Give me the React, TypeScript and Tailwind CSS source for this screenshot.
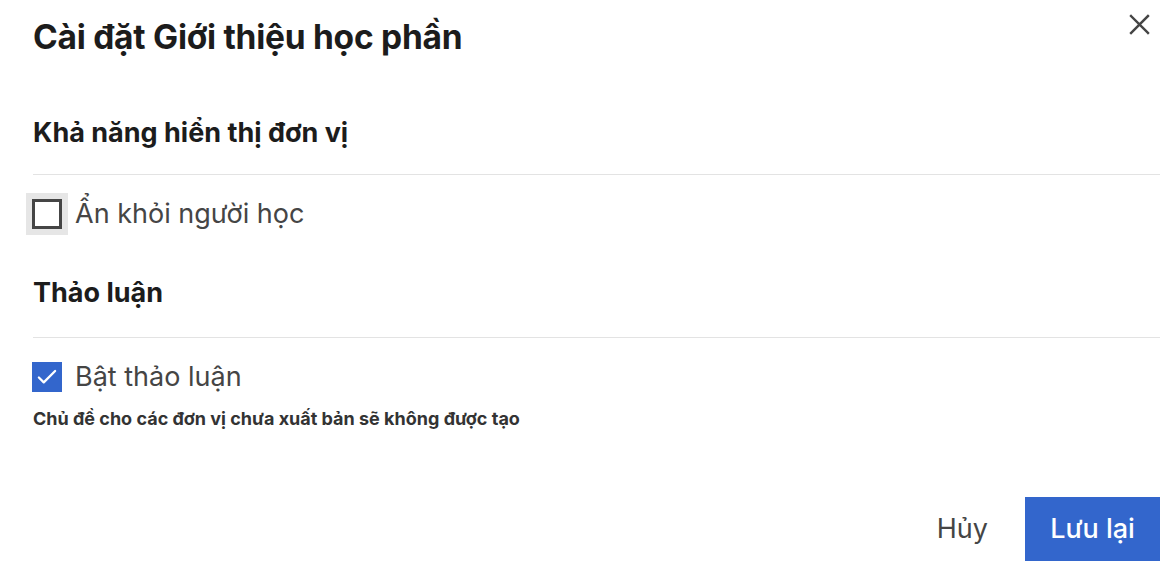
import { useState } from "react";

function Checkbox({ checked, focused, onChange }: { checked: boolean; focused?: boolean; onChange: () => void }) {
  return (
    <button
      type="button"
      onClick={onChange}
      className={`w-[42px] h-[42px] -ml-[7px] flex items-center justify-center ${focused ? "bg-[#e6e6e6]" : ""}`}
    >
      {checked ? (
        <span className="w-[30px] h-[30px] bg-[#3366cc] flex items-center justify-center">
          <svg width="26" height="26" viewBox="0 0 24 24" fill="none" stroke="white" strokeWidth="2.1" strokeLinecap="round" strokeLinejoin="round">
            <path d="M4.5 12.5l4.5 4.5L19.5 6.5" />
          </svg>
        </span>
      ) : (
        <span className="w-[30px] h-[30px] border-[3px] border-[#454545] bg-white" />
      )}
    </button>
  );
}

export default function App() {
  const [hidden, setHidden] = useState(false);
  const [discussion, setDiscussion] = useState(true);

  return (
    <div className="w-[1176px] h-[570px] bg-white text-[#1c1c1c] font-['Inter',sans-serif] flex flex-col pl-[33px] pr-[16px]">
      <div className="flex items-start justify-between pt-[17px]">
        <h1 className="text-[33.5px] leading-[40px] font-bold tracking-[-0.25px]">Cài đặt Giới thiệu học phần</h1>
        <button type="button" className="mt-[-11px] mr-[3px] w-[36px] h-[36px] flex items-center justify-center text-[#454545]">
          <svg width="29" height="29" viewBox="0 0 24 24" fill="none" stroke="currentColor" strokeWidth="2" strokeLinecap="square">
            <path d="M5 5l14 14M19 5L5 19" />
          </svg>
        </button>
      </div>

      <h2 className="mt-[58px] text-[27px] leading-[36px] font-bold">Khả năng hiển thị đơn vị</h2>
      <div className="mt-[23px] h-px bg-[#e3e3e3]" />
      <label className="mt-[18px] flex items-center gap-[7px]">
        <Checkbox checked={hidden} focused onChange={() => setHidden((p) => !p)} />
        <span className="text-[27px] leading-[36px] text-[#454545]">Ẩn khỏi người học</span>
      </label>

      <h2 className="mt-[40px] text-[27px] leading-[36px] font-bold">Thảo luận</h2>
      <div className="mt-[26px] h-px bg-[#e3e3e3]" />
      <label className="mt-[18px] flex items-center gap-[7px]">
        <Checkbox checked={discussion} onChange={() => setDiscussion((p) => !p)} />
        <span className="text-[27px] leading-[36px] text-[#454545]">Bật thảo luận</span>
      </label>
      <p className="mt-[8px] text-[18px] leading-[26px] font-bold text-[#333333]">
        Chủ đề cho các đơn vị chưa xuất bản sẽ không được tạo
      </p>

      <div className="mt-auto mb-[9px] flex justify-end items-center gap-[17px]">
        <button type="button" className="h-[64px] px-[20px] text-[27px] text-[#454545]">Hủy</button>
        <button type="button" className="h-[64px] w-[135px] bg-[#3366cc] text-white text-[27px] font-medium">Lưu lại</button>
      </div>
    </div>
  );
}
